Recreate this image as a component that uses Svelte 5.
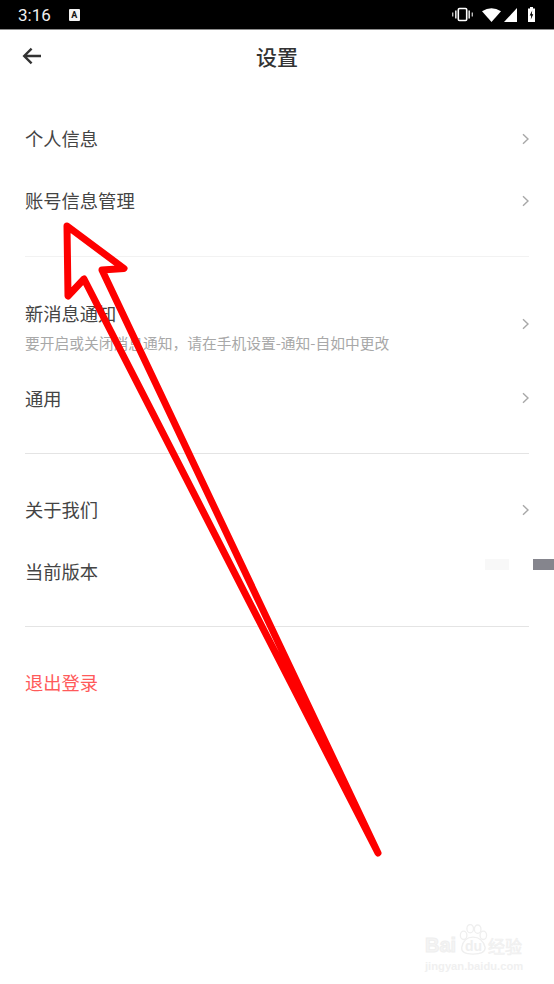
<script lang="ts">
	const groups = [
		[
			{ label: '个人信息', h: 62, arrow: true },
			{ label: '账号信息管理', h: 62, arrow: true }
		],
		[
			{
				label: '新消息通知',
				sub: '要开启或关闭消息通知，请在手机设置-通知-自如中更改',
				h: 87,
				arrow: true
			},
			{ label: '通用', h: 61, arrow: true }
		],
		[
			{ label: '关于我们', h: 62, arrow: true },
			{ label: '当前版本', h: 62, version: true }
		]
	];
</script>

<div class="screen">
	<div class="statusbar">
		<div class="status-left">
			<span class="time">3:16</span>
			<span class="a-icon">A</span>
		</div>
		<div class="status-right">
			<svg class="vibrate" width="21" height="15" viewBox="0 0 21 15">
				<rect x="6.3" y="1.5" width="8.4" height="12" rx="1.2" fill="none" stroke="#fff" stroke-width="1.6" />
				<rect x="3" y="3.5" width="1.6" height="8" fill="#ddd" />
				<rect x="16.4" y="3.5" width="1.6" height="8" fill="#ddd" />
				<rect x="0" y="5.5" width="1.4" height="4" fill="#bbb" />
				<rect x="19.6" y="5.5" width="1.4" height="4" fill="#bbb" />
			</svg>
			<svg class="wifi" width="19" height="14" viewBox="0 0 19 14">
				<path d="M0 3.2 Q9.5 -2.6 19 3.2 L9.5 14 Z" fill="#fff" />
			</svg>
			<svg class="signal" width="13" height="14" viewBox="0 0 13 14">
				<path d="M13 0 V14 H0 Z" fill="#fff" />
			</svg>
			<svg class="battery" width="7" height="15" viewBox="0 0 7 15">
				<path d="M2 0 H5 V1.4 H7 V15 H0 V1.4 H2 Z" fill="#fff" />
				<path d="M4.2 3.4 L1.7 8.6 H3.2 L2.8 12.6 L5.3 7.2 H3.8 Z" fill="#000" />
			</svg>
		</div>
	</div>

	<header class="topbar">
		<svg class="back" width="20" height="18" viewBox="0 0 20 18">
			<path d="M19 9 H2.5 M9.6 1.6 L2.2 9 L9.6 16.4" fill="none" stroke="#333" stroke-width="2.4" />
		</svg>
		<h1>设置</h1>
	</header>

	<main>
		{#each groups as rows}
			<section class="group">
				{#each rows as row}
					<div class="row" style="height: {row.h}px">
						<div class="text" class:has-sub={row.sub}>
							<div class="label">{row.label}</div>
							{#if row.sub}
								<div class="sub">{row.sub}</div>
							{/if}
						</div>
						{#if row.arrow}
							<svg class="chevron" width="8" height="12" viewBox="0 0 8 12">
								<path d="M2 1.2 L7 6 L2 10.8" fill="none" stroke="#a8a8a8" stroke-width="1.4" />
							</svg>
						{/if}
						{#if row.version}
							<div class="version">
								<span class="patch"></span>
								<span class="bar"></span>
							</div>
						{/if}
					</div>
				{/each}
			</section>
		{/each}
		<div class="logout"><span>退出登录</span></div>
	</main>

	<svg class="annotation" width="554" height="984" viewBox="0 0 554 984">
		<path
			d="M378 853 L84 279 L68 296 L67 226 L124 268.5 L102 270 Z"
			fill="none"
			stroke="#fe0000"
			stroke-width="7"
			stroke-linejoin="round"
			stroke-linecap="round"
		/>
	</svg>

	<div class="watermark">
		<div class="wm-top">
			<span class="wm-bai">Bai</span>
			<span class="wm-paw">
				<svg width="30" height="31" viewBox="0 0 32 33">
					<g fill="none" stroke="#efefef" stroke-width="1.4">
						<ellipse cx="6" cy="12" rx="3.5" ry="4.5" />
						<ellipse cx="13" cy="5" rx="3.5" ry="4.5" />
						<ellipse cx="21" cy="5.5" rx="3.5" ry="4.5" />
						<ellipse cx="27" cy="12" rx="3.5" ry="4.5" />
						<path d="M4 25 Q6 14 16 14 Q26 14 29 25 Q29 32 16 32 Q3 32 4 25 Z" />
					</g>
				</svg>
				<span class="wm-du">du</span>
			</span>
			<span class="wm-cn">经验</span>
		</div>
		<div class="wm-url">jingyan.baidu.com</div>
	</div>
</div>

<style>
	:global(body) {
		margin: 0;
		background: #fff;
	}

	.screen {
		position: relative;
		width: 554px;
		height: 984px;
		overflow: hidden;
		background: #fff;
		font-family: "Noto Sans CJK SC", "Noto Sans", sans-serif;
		color: #333;
	}

	.statusbar {
		display: flex;
		align-items: center;
		justify-content: space-between;
		height: 29px;
		padding: 0 19px 0 18px;
		background: #000;
		border-bottom: 1px solid #8c8c8c;
	}

	.status-left {
		display: flex;
		align-items: center;
		gap: 18px;
	}

	.time {
		font-family: Roboto, sans-serif;
		font-size: 17px;
		color: #f0f0f0;
	}

	.a-icon {
		display: flex;
		align-items: center;
		justify-content: center;
		width: 11px;
		height: 12px;
		border-radius: 1px;
		background: #f4f4f4;
		color: #111;
		font-family: Roboto, sans-serif;
		font-size: 9px;
		font-weight: 700;
	}

	.status-right {
		display: flex;
		align-items: center;
	}

	.wifi {
		margin-left: 9px;
	}

	.signal {
		margin-left: 3px;
	}

	.battery {
		margin-left: 11px;
	}

	.topbar {
		position: relative;
		display: flex;
		align-items: center;
		justify-content: center;
		height: 53px;
	}

	.back {
		position: absolute;
		left: 22px;
		top: 17px;
	}

	h1 {
		margin: -2px 0 0;
		font-size: 21px;
		font-weight: 500;
		color: #333;
	}

	main {
		padding: 25px 25px 0;
	}

	.group {
		padding-bottom: 24px;
		border-bottom: 1px solid #e4e4e4;
	}

	.group:nth-of-type(1) {
		margin-bottom: 24px;
		border-bottom-color: #f2f2f2;
	}

	.group:nth-of-type(2) {
		margin-bottom: 25px;
	}

	.group:nth-of-type(3) {
		margin-bottom: 25px;
		padding-bottom: 23px;
	}

	.row {
		display: flex;
		align-items: center;
		justify-content: space-between;
	}

	.text {
		margin-bottom: 2px;
	}

	.text.has-sub {
		margin: 3px 0 0;
	}

	.label {
		font-size: 18.3px;
		line-height: 26px;
		color: #444;
	}

	.sub {
		margin-top: 7px;
		font-size: 14.75px;
		line-height: 20px;
		color: #a8a8a8;
		white-space: nowrap;
	}

	.chevron {
		margin-top: -1px;
	}

	.version {
		display: flex;
		align-items: center;
		gap: 24px;
		margin-right: -25px;
		margin-top: -16px;
	}

	.patch {
		width: 24px;
		height: 11px;
		background: #f8f8f8;
	}

	.bar {
		width: 21px;
		height: 11px;
		background: #85858d;
	}

	.logout {
		display: flex;
		align-items: center;
		height: 62px;
		font-size: 18.3px;
		line-height: 26px;
		color: #ff5a5a;
	}

	.logout span {
		margin-bottom: 2px;
	}

	.annotation {
		position: absolute;
		left: 0;
		top: 0;
		pointer-events: none;
	}

	.watermark {
		position: absolute;
		left: 425px;
		top: 924px;
		width: 100px;
		color: #f5f5f5;
	}

	.wm-top {
		display: flex;
		align-items: flex-end;
		height: 32px;
		font-family: "Liberation Sans", sans-serif;
		line-height: 1;
	}

	.wm-bai {
		width: 33px;
		font-size: 20px;
		font-weight: 700;
		margin-bottom: 1px;
		-webkit-text-stroke: 1px #efefef;
	}

	.wm-paw {
		position: relative;
		width: 30px;
		height: 32px;
	}

	.wm-paw svg {
		position: absolute;
		left: 0;
		top: 0;
	}

	.wm-du {
		position: absolute;
		left: 7px;
		bottom: 3px;
		font-size: 14px;
		font-weight: 700;
		color: #efefef;
	}

	.wm-cn {
		font-family: "Noto Sans CJK SC", sans-serif;
		font-size: 17px;
		line-height: 20px;
		-webkit-text-stroke: 0.6px #efefef;
	}

	.wm-url {
		margin-top: 3px;
		font-family: "Liberation Sans", sans-serif;
		font-size: 11.2px;
		font-weight: 700;
		line-height: 14px;
		white-space: nowrap;
		color: #f0f0f0;
	}
</style>
